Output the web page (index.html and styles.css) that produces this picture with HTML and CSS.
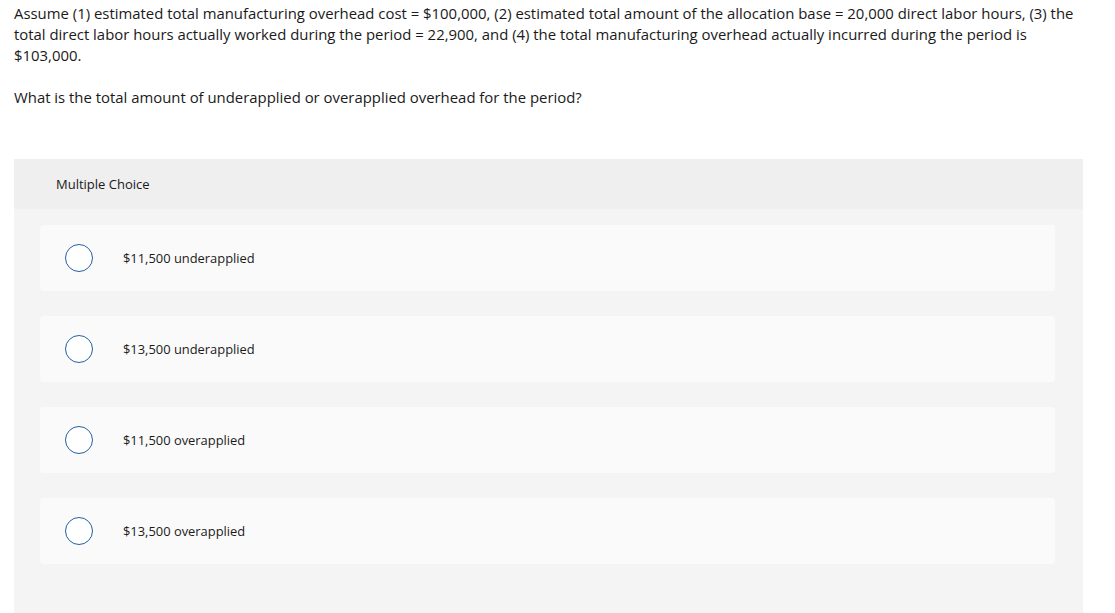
FILE: index.html
```html
<!DOCTYPE html>
<html lang="en">
<head>
<meta charset="utf-8">
<title>Multiple Choice</title>
<link rel="stylesheet" href="styles.css">
</head>
<body>
<div class="page">
  <div class="question">
    <p>Assume (1) estimated total manufacturing overhead cost = $100,000, (2) estimated total amount of the allocation base = 20,000 direct labor hours, (3) the total direct labor hours actually worked during the period = 22,900, and (4) the total manufacturing overhead actually incurred during the period is $103,000.</p>
    <p>What is the total amount of underapplied or overapplied overhead for the period?</p>
  </div>
  <section class="mc">
    <div class="mc-header">Multiple Choice</div>
    <div class="mc-body">
      <div class="option"><span class="radio"></span><span class="label">$11,500 underapplied</span></div>
      <div class="option"><span class="radio"></span><span class="label">$13,500 underapplied</span></div>
      <div class="option"><span class="radio"></span><span class="label">$11,500 overapplied</span></div>
      <div class="option"><span class="radio"></span><span class="label">$13,500 overapplied</span></div>
    </div>
  </section>
</div>
</body>
</html>
```
FILE: styles.css
```css
html, body {
  margin: 0;
  padding: 0;
  background: #ffffff;
}
body {
  font-family: "Open Sans", Lato, sans-serif;
  color: #1a1a1a;
}
.page {
  padding: 3px 32px 0 14px;
}
.question p {
  margin: 0 0 21px 0;
  font-size: 14.9px;
  line-height: 21px;
}
.mc {
  margin-top: 51px;
  background: #f4f4f4;
  height: 460px;
}
.mc-header {
  height: 50px;
  background: #efefef;
  display: flex;
  align-items: center;
  padding-left: 42px;
  font-size: 13px;
}
.mc-body {
  display: flex;
  flex-direction: column;
  gap: 25px;
  padding: 16px 28px 0 26px;
}
.option {
  height: 66px;
  background: #fafafa;
  border-radius: 4px;
  display: flex;
  align-items: center;
  padding-left: 25px;
}
.radio {
  box-sizing: border-box;
  width: 28px;
  height: 28px;
  border: 1.5px solid #2260a0;
  border-radius: 50%;
  background: #fff;
  flex: none;
}
.label {
  margin-left: 30px;
  font-size: 12.9px;
}
```
